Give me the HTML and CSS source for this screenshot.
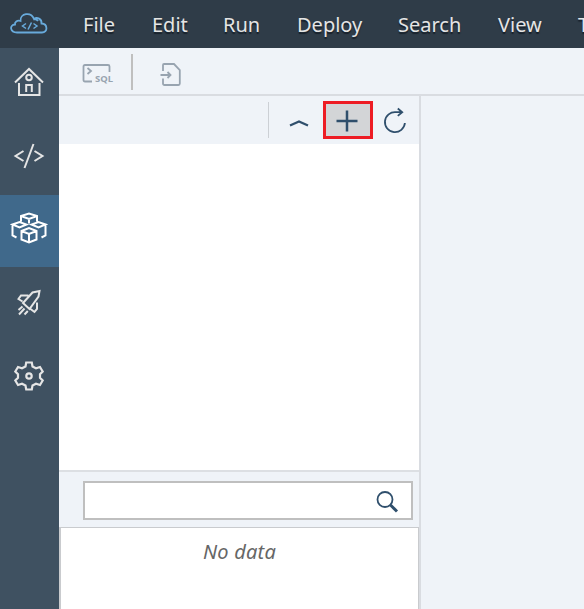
FILE: index.html
```html
<!DOCTYPE html>
<html lang="en">
<head>
<meta charset="utf-8">
<title>Database Explorer</title>
<link rel="stylesheet" href="styles.css">
</head>
<body>
<header class="topbar">
  <svg class="logo" viewBox="0 0 40 24" width="40" height="24"><path d="M8 20.500H33C39 20.500 39 12 32.500 11.500C33 7 28 4.500 25 7C22-.5 11 1 11.500 9C8 8 5.500 10 6 12.500C0 13 1 20.500 8 20.500Z M25 7Q28 7 29 9"/><path class="logo-code" d="M17 11.500L13.500 14L17 16.500M24.500 11.500L28 14L24.500 16.500M22.500 10.500L19 17.500"/></svg>
  <nav class="menu"><span class="file">File</span><span class="edit">Edit</span><span class="run">Run</span><span class="deploy">Deploy</span><span class="search">Search</span><span class="view">View</span><span>Tools</span></nav>
</header>
<div class="workspace">
  <aside class="rail">
    <a class="rail-item"><svg viewBox="0 0 34 34" width="34" height="34"><path d="M3 17.500L17 4L31 17.500M7 18V30H27.500V18M14.200 27V20H19.800V27"/><circle cx="17" cy="12.500" r="2.800"/></svg></a>
    <a class="rail-item code"><svg viewBox="0 0 34 34" width="34" height="34"><path d="M11.500 12L3.500 17L11.500 22M22.500 12L30.500 17L22.500 22M21.500 5L12.500 29"/></svg></a>
    <a class="rail-item active"><svg viewBox="0 0 38 34" width="38" height="34"><path d="M11 10.500V5L19 2.500L27 5V10.500M11 5L19 8L27 5M19 8V12.500M2.500 13.500L9.500 11L16.500 13.500L9.500 16.500ZM35.500 13.500L28.500 11L21.500 13.500L28.500 16.500ZM2.500 13.500V24.500L6.500 26.500M35.500 13.500V24.500L31.500 26.500M11.500 20L19 17L26.500 20V28.500L19 31.500L11.500 28.500ZM11.500 20L19 23L26.500 20M19 23V31.500"/></svg></a>
    <a class="rail-item rocket"><svg viewBox="0 0 34 34" width="34" height="34"><path d="M27.500 6L26.500 11.500L17.500 24L11 18L20.500 7.500ZM16.500 10.500L9 10.500L6.500 14L10.500 16.500M25 17.500L25 24L22.500 27L18.500 24M10.500 21.500L6.500 25M12.500 23.500L7 29.500M15.800 26L12.500 29.500"/></svg></a>
    <a class="rail-item gear"><svg viewBox="0 0 34 34" width="34" height="34"><path d="M14.200 3.500H19.800L20.500 7.500L24 9.300L28 8L30.700 12.500L28 15.300V18.700L30.700 21.500L28 26L24 24.700L20.500 26.500L19.800 30.500H14.200L13.500 26.500L10 24.700L6 26L3.300 21.500L6 18.700V15.300L3.300 12.500L6 8L10 9.300L13.500 7.500Z"/><circle cx="17" cy="17" r="2.700"/></svg></a>
  </aside>
  <main class="content">
    <div class="toolbar">
      <svg class="sql-icon" viewBox="0 0 32 24" width="32" height="24"><path d="M10 19.500H3Q1.500 19.500 1.500 18V4.500Q1.500 3 3 3H26Q27.500 3 27.500 4.500V10M5.500 6L9 9L5.500 12"/><text x="13" y="20" textLength="18" lengthAdjust="spacingAndGlyphs">SQL</text></svg>
      <span class="divider"></span>
      <svg class="import-icon" viewBox="0 0 24 26" width="24" height="26"><path d="M4 10V4Q4 3 5 3H15L20.800 9V22.500Q20.800 24 19.500 24H5.500Q4 24 4 22.500V17.500M1.500 14H11.500M8.500 11L11.500 14L8.500 17"/></svg>
    </div>
    <div class="columns">
      <section class="panel">
        <div class="actions">
          <button class="action collapse"><svg viewBox="0 0 20 10" width="20" height="10"><path d="M1 7.500L10 3.500L19 7.500"/></svg></button>
          <button class="action add"><svg viewBox="0 0 22 22" width="22" height="22"><path d="M.5 11H21.500M11 .5V21.500"/></svg></button>
          <button class="action refresh"><svg viewBox="0 0 26 28" width="26" height="28"><path d="M20 6.200H14A10 10 0 1 0 22.900 17M15.800 2.500L20.200 6.200L15.800 9.900"/></svg></button>
        </div>
        <div class="tree"></div>
        <div class="filter"><div class="field"><svg viewBox="0 0 24 24" width="24" height="24"><circle cx="10" cy="9.500" r="7.500"/><path d="M15.500 15L22 21.500"/></svg></div></div>
        <div class="results">No data</div>
      </section>
      <section class="editor"></section>
    </div>
  </main>
</div>
</body>
</html>
```
FILE: styles.css
```css
* { box-sizing: border-box; }
body { margin: 0; height: 609px; overflow: hidden; font-family: "Noto Sans", "Open Sans", sans-serif; background: #eff3f8; }
svg { display: block; flex: none; fill: none; stroke: currentColor; stroke-width: 2; }
.topbar { display: flex; align-items: center; height: 48px; background: #2f3c48; overflow: hidden; }
.logo { margin-left: 9px; color: #68aadb; stroke-width: 1.8; }
.logo-code { stroke-width: 1.5; }
.menu { display: flex; margin-left: 34px; padding-top: 2px; color: #e5e5e5; font-size: 20px; line-height: 28px; white-space: nowrap; text-shadow: 0 2px 1px #17202a; }
.menu span { flex: none; }
.file { width: 69px; }
.edit { width: 71px; }
.run { width: 74px; }
.deploy { width: 101px; }
.search { width: 100px; }
.view { width: 80px; }
.workspace { display: flex; height: 561px; }
.rail { width: 59px; flex: none; background: #3f5161; color: #e5e5e5; }
.rail-item { display: flex; height: 73px; align-items: center; justify-content: center; padding: 0 1px 5px 0; }
.rail-item.code { height: 74px; }
.rail-item.active { height: 72px; background: #40698b; color: #fff; padding-bottom: 6px; }
.rail-item.rocket { padding-bottom: 3px; }
.rail-item.gear { padding-bottom: 2px; }
.gear svg { stroke-width: 2.2; }
.content { flex: 1; min-width: 0; display: flex; flex-direction: column; }
.toolbar { display: flex; align-items: center; height: 48px; flex: none; border-bottom: 2px solid #d9dce1; color: #98a4b0; }
.toolbar svg { stroke-width: 1.8; }
.sql-icon { margin: 5px 0 0 23px; }
.sql-icon text { fill: currentColor; stroke: none; font-size: 9.3px; font-weight: 700; }
.divider { width: 2px; height: 36px; margin: 2px 26px 0 17px; background: #bfbfbf; }
.import-icon { margin-top: 5px; }
.columns { display: flex; flex: 1; min-height: 0; }
.panel { width: 362px; flex: none; display: flex; flex-direction: column; border-right: 2px solid #d9dce1; }
.actions { display: flex; justify-content: flex-end; align-items: center; height: 48px; flex: none; }
.action { display: flex; align-items: center; justify-content: center; padding: 0; border: 0; background: none; color: #2f4f6c; }
.collapse { width: 55px; height: 36px; border-left: 1px solid #ccd0d5; padding: 6px 0 0 5px; }
.collapse svg { stroke-width: 2.3; }
.add { width: 50px; height: 38px; background: #d3d5d7; border: 3px solid #ed1c24; padding: 2px 2px 0 0; }
.add svg { stroke-width: 2.5; }
.refresh { width: 46px; height: 38px; padding-right: 2px; }
.refresh svg { stroke-width: 1.8; }
.tree { height: 326px; flex: none; background: #fff; }
.filter { height: 57px; flex: none; border-top: 2px solid #dcdfe3; padding: 9px 6px 0 24px; }
.field { display: flex; justify-content: flex-end; height: 39px; background: #fff; border: 2px solid #bfbfbf; padding: 7px 12px 0 0; color: #2f4f6c; }
.field circle { stroke-width: 1.8; }
.field path { stroke-width: 3; }
.results { flex: 1; background: #fff; border: 1px solid #c9cbce; border-left-width: 2px; border-bottom: 0; padding-top: 10px; text-align: center; font-style: italic; font-size: 20px; letter-spacing: .2px; line-height: 27px; color: #666; }
.editor { flex: 1; background: #eff3f8; }
```
